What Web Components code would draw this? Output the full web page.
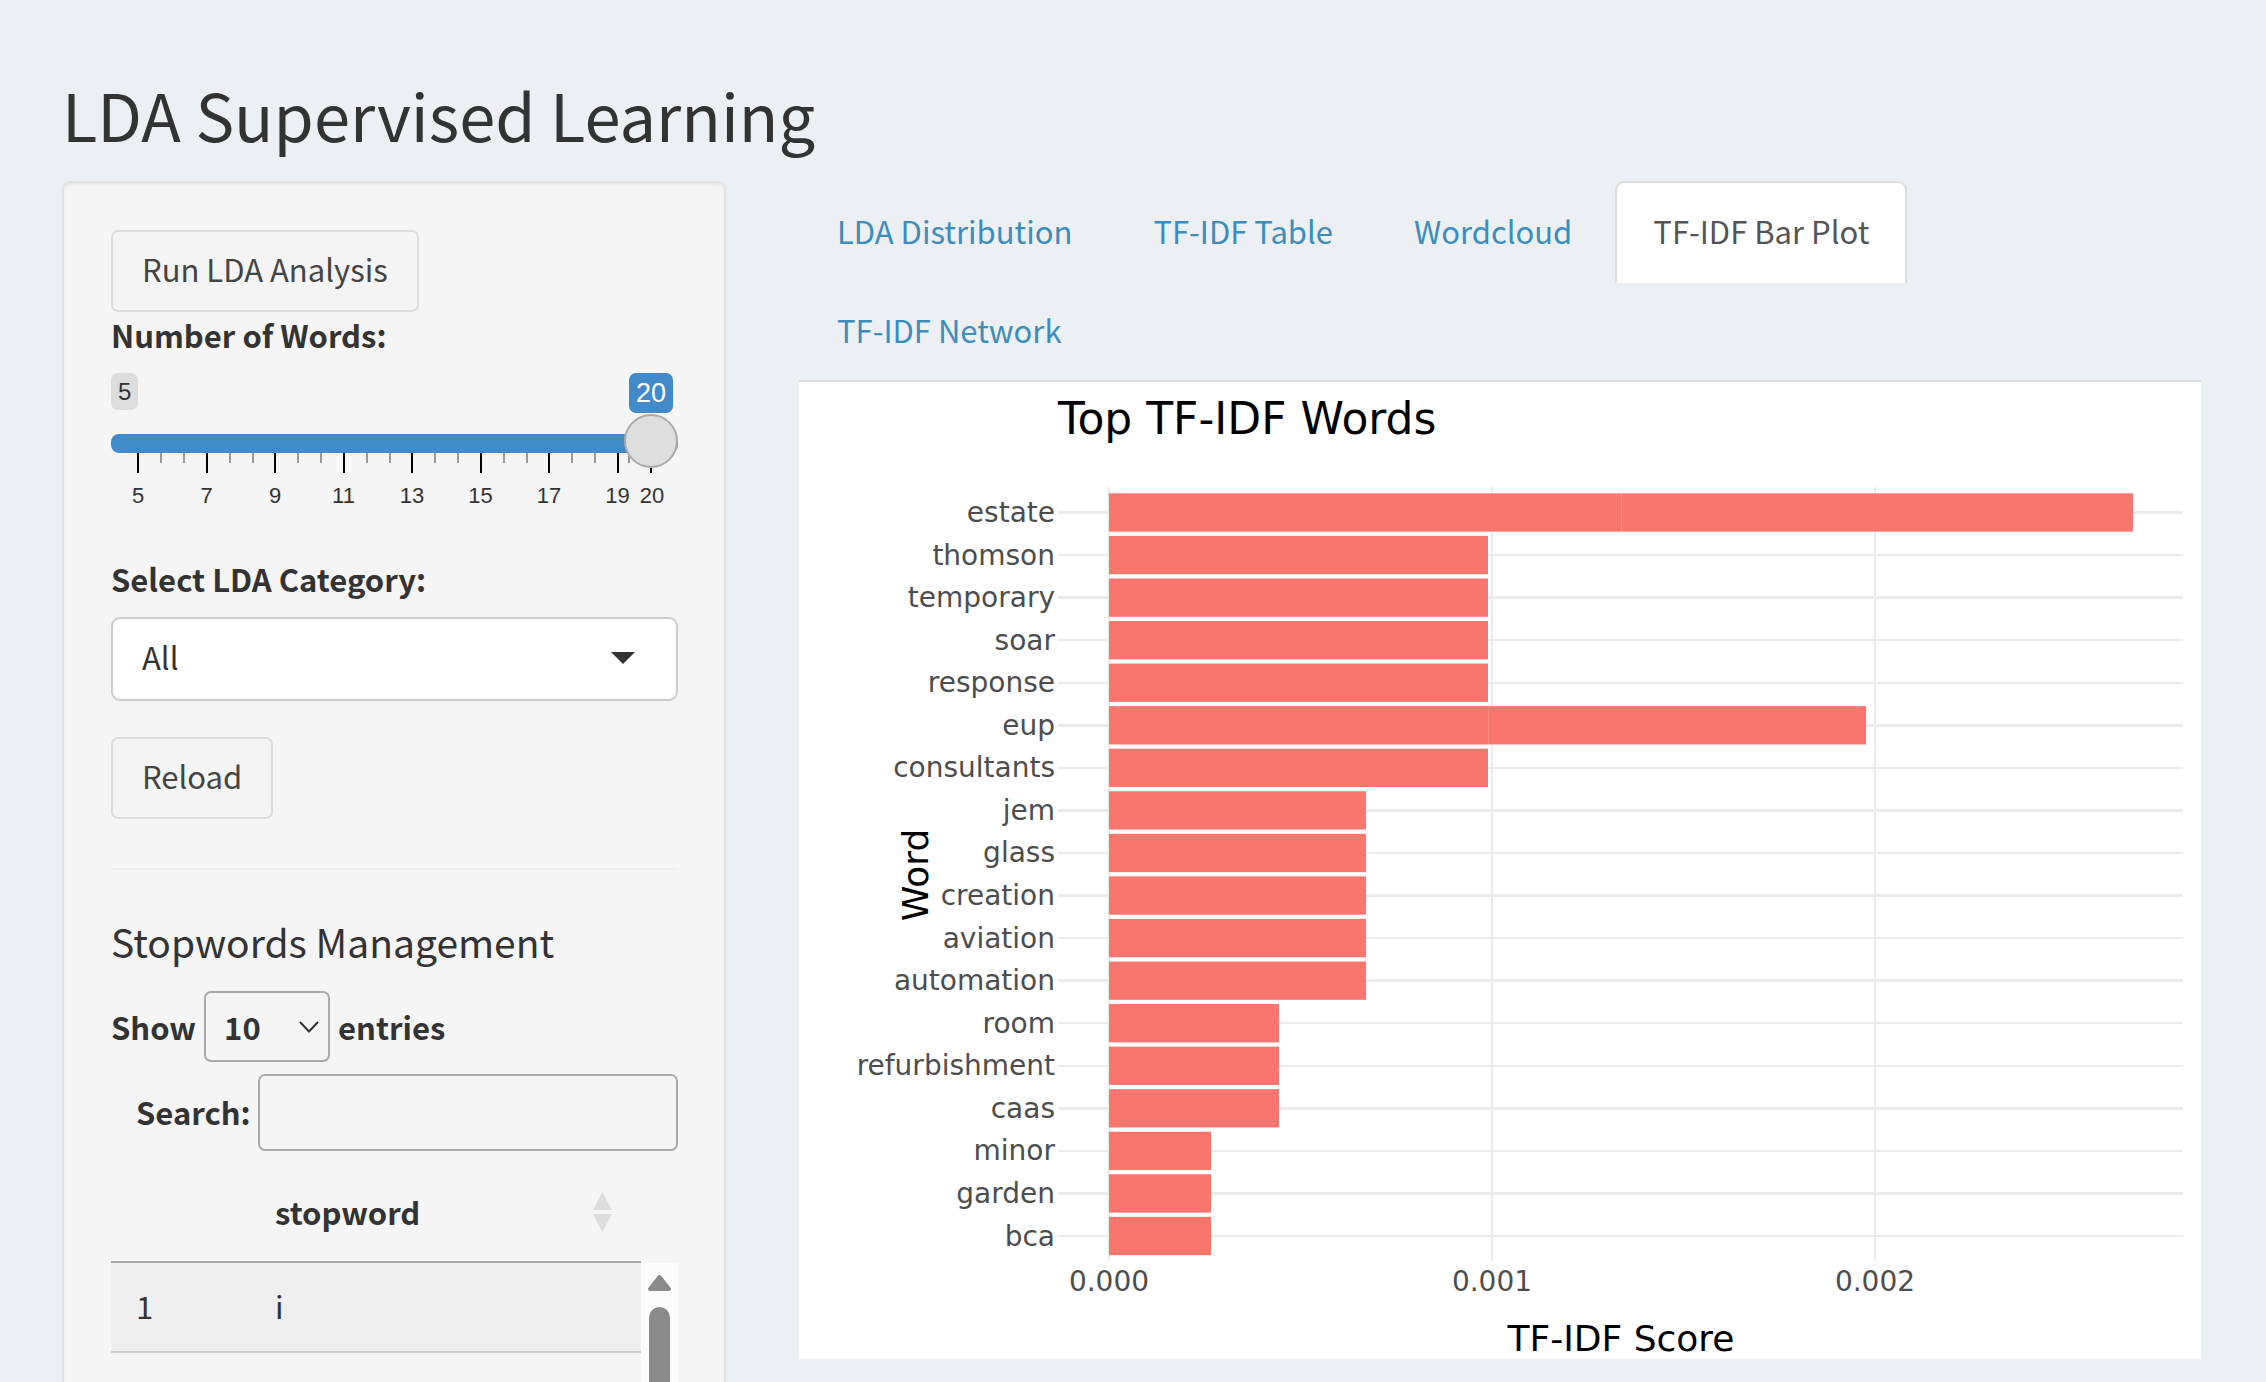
<!DOCTYPE html>
<html lang="en">
<head>
<meta charset="utf-8">
<title>LDA Supervised Learning</title>
<style>
  html { background: #ecf0f5; }
  body { margin: 0; height: 100vh; overflow: hidden; color: #333; font: 31px/46px "Noto Sans CJK JP", "Source Sans Pro", "Open Sans", sans-serif; }
</style>
</head>
<body>
<lda-page>
  <side-panel slot="side">
    <action-button>Run LDA Analysis</action-button>
    <word-slider></word-slider>
    <category-select></category-select>
    <action-button>Reload</action-button>
    <stopword-manager></stopword-manager>
  </side-panel>
  <tab-strip slot="main"></tab-strip>
  <bar-plot slot="main"></bar-plot>
</lda-page>
<script>
const define = (name, html, setup) => customElements.define(name, class extends HTMLElement {
  constructor() {
    super();
    this.attachShadow({ mode: "open" }).innerHTML = "<style>*{box-sizing:border-box}:host{display:block}</style>" + html;
    if (setup) setup(this.shadowRoot);
  }
});

define("lda-page", `
<style>
  :host { padding: 78px 65px 0 62px; }
  h1 { margin: 0 0 31px; font-size: 65px; line-height: 72px; font-weight: 400; }
  .row { display: grid; grid-template-columns: 664px minmax(0, 1fr); column-gap: 73px; align-items: start; }
</style>
<h1>LDA Supervised Learning</h1>
<div class="row"><slot name="side"></slot><main><slot name="main"></slot></main></div>`);

define("side-panel", `
<style>
  :host { padding: 47px 46px 47px 47px; background: #f5f5f5; border: 2px solid #e3e3e3; border-radius: 8px; box-shadow: inset 0 2px 3px rgba(0,0,0,.06); }
</style>
<slot></slot>`);

define("action-button", `
<style>
  button { display: block; height: 82px; padding: 0 29px 4px; background: #f4f4f4; color: #444; border: 2px solid #ddd; border-radius: 7px; font: inherit; }
</style>
<button type="button"><slot></slot></button>`);

define("word-slider", `
<style>
  :host { position: relative; z-index: 0; font-family: "Liberation Sans", Arial, sans-serif; }
  label { display: block; font-family: "Noto Sans CJK JP", sans-serif; font-weight: 700; }
  .tags { display: flex; justify-content: space-between; align-items: flex-start; height: 61px; margin: 15px 5px 0 0; }
  .tags span { padding: 0 7px; border-radius: 7px; }
  .min { background: #ddd; font-size: 24px; line-height: 37px; }
  .now { background: #428bca; color: #fff; font-size: 27px; line-height: 40px; }
  input { display: block; appearance: none; -webkit-appearance: none; width: 100%; height: 19px; margin: 0; background: none; }
  input::-webkit-slider-runnable-track { height: 19px; background: #428bca; border-radius: 8px; }
  input::-webkit-slider-thumb { -webkit-appearance: none; width: 54px; height: 54px; margin-top: -20px; border: 2px solid #ababab; border-radius: 50%; background: #dedede; position: relative; z-index: 1; }
  svg { display: block; width: 100%; height: auto; font-size: 22px; position: relative; z-index: -1; }
</style>
<label for="words">Number of Words:</label>
<div class="tags"><span class="min">5</span><span class="now">20</span></div>
<input id="words" type="range" min="5" max="20" value="20">
<svg viewBox="0 0 567 55" shape-rendering="crispEdges"></svg>`, root => {
  const line = (x, h, c, w) => `<path d="M${x} 0V${h}" stroke="${c}" stroke-width="${w}"/>`;
  let out = "";
  for (let i = 0; i < 8; i++) {
    const x = 27 + i * 68.5;
    out += line(x, 20, "#000", 2) + `<text x="${x}" y="50" text-anchor="middle" fill="#333">${5 + 2 * i}</text>`;
    if (i < 7) out += line(x + 23, 10, "#999", 2) + line(x + 46, 10, "#999", 2);
  }
  out += line(518, 10, "#999", 2) + line(540, 20, "#000", 2) + `<text x="541" y="50" text-anchor="middle" fill="#333">20</text>`;
  root.querySelector("svg").innerHTML = out;
});

define("category-select", `
<style>
  :host { padding: 48px 0 36px; }
  label { display: block; margin-bottom: 15px; font-weight: 700; }
  .box { display: grid; align-items: center; }
  .box > * { grid-area: 1 / 1; }
  select { appearance: none; width: 100%; height: 84px; padding: 0 29px 4px; background: #fff; color: #333; border: 2px solid #ccc; border-radius: 9px; font: inherit; }
  svg { justify-self: end; margin: 0 43px 3px 0; pointer-events: none; }
</style>
<label for="cat">Select LDA Category:</label>
<div class="box">
  <select id="cat"><option>All</option></select>
  <svg width="24" height="12" viewBox="0 0 24 12"><path d="M0 0H24L12 12Z" fill="#333"/></svg>
</div>`);

define("stopword-manager", `
<style>
  hr { margin: 49px 0 45px; border: 0; border-top: 2px solid #eee; }
  h4 { margin: 0 0 24px; font-size: 39px; line-height: 52px; font-weight: 400; }
  .show { display: flex; align-items: center; gap: 8px; font-weight: 700; }
  .box { display: grid; align-items: center; }
  .box > * { grid-area: 1 / 1; }
  select { appearance: none; width: 126px; height: 71px; padding: 0 18px; background: transparent; color: #333; border: 2px solid #aaa; border-radius: 7px; font: inherit; }
  .box svg { justify-self: end; margin-right: 11px; pointer-events: none; }
  .search { display: flex; align-items: center; gap: 7px; margin-top: 12px; padding-left: 25px; font-weight: 700; }
  .search label { padding-bottom: 2px; }
  .search input { flex: 1; min-width: 0; height: 77px; background: transparent; border: 2px solid #aaa; border-radius: 7px; font: inherit; padding: 0 12px; }
  table { width: 100%; border-collapse: collapse; table-layout: fixed; text-align: left; }
  th { height: 111px; padding: 12px 0 0; font-weight: 700; }
  col:first-child { width: 164px; }
  .sort { display: flex; justify-content: space-between; align-items: center; padding-right: 29px; }
  .scroll { display: grid; grid-template-columns: minmax(0, 1fr) 37px; }
  thead tr { border-bottom: 2px solid #aaa; }
  td { height: 90px; padding: 0 0 3px; }
  td:first-child { padding-left: 25px; }
  tbody tr { background: #efefef; border-bottom: 2px solid #ccc; }
  tbody tr + tr { background: none; }
  .bar { margin-top: 112px; background: #fcfcfc; padding-top: 12px; display: flex; flex-direction: column; align-items: center; gap: 16px; }
  .thumb { width: 21px; flex: 1; background: #8b8b8b; border-radius: 11px; }
</style>
<hr>
<h4>Stopwords Management</h4>
<div class="show"><label for="len">Show</label>
  <div class="box"><select id="len"><option>10</option></select>
  <svg width="20" height="12" viewBox="0 0 20 12"><path d="M1 1L10 10.500L19 1" fill="none" stroke="#333" stroke-width="2"/></svg></div>
  <span>entries</span></div>
<div class="search"><label for="find">Search:</label><input id="find" type="search"></div>
<div class="scroll">
  <table><colgroup><col><col></colgroup>
    <thead><tr><th></th><th><div class="sort">stopword
      <svg width="19" height="40" viewBox="0 0 19 40"><path d="M9.500 0L19 18H0ZM9.500 40L19 22H0Z" fill="#ddd"/></svg></div></th></tr></thead>
    <tbody><tr><td>1</td><td>i</td></tr><tr><td></td><td></td></tr></tbody>
  </table>
  <div class="bar"><svg width="23" height="16" viewBox="0 0 23 16"><path d="M11.500 2L21 14H2Z" fill="#8b8b8b" stroke="#8b8b8b" stroke-width="4" stroke-linejoin="round"/></svg><div class="thumb"></div></div>
</div>`);

define("tab-strip", `
<style>
  nav { display: flex; flex-wrap: wrap; column-gap: 5px; padding: 0 240px 1px 0; border-bottom: 2px solid #ddd; }
  a { height: 102px; margin-bottom: -3px; padding: 25px 36px; border: 2px solid transparent; border-bottom: 0; border-radius: 9px 9px 0 0; color: #3c8dbc; text-decoration: none; }
  a[aria-current] { background: #fff; border-color: #ddd; color: #555; }
</style>
<nav><a href="#dist">LDA Distribution</a><a href="#table">TF-IDF Table</a><a href="#cloud">Wordcloud</a><a href="#bar" aria-current="page">TF-IDF Bar Plot</a><a href="#net">TF-IDF Network</a></nav>`);

define("bar-plot", `
<style>
  :host { background: #fff; font-family: "DejaVu Sans", Verdana, sans-serif; }
  svg { display: block; width: 100%; height: auto; }
  .tick { font-size: 28px; fill: #4d4d4d; }
  .axis { font-size: 36px; }
</style>
<svg viewBox="0 0 1402 977" role="img" aria-label="Top TF-IDF Words"></svg>`, root => {
  const zero = 310, unit = 383;
  const rows = [["estate", 1024, 512], ["thomson", 379], ["temporary", 379], ["soar", 379], ["response", 379],
    ["eup", 757, 379], ["consultants", 379], ["jem", 257], ["glass", 257], ["creation", 257], ["aviation", 257],
    ["automation", 257], ["room", 170], ["refurbishment", 170], ["caas", 170], ["minor", 102], ["garden", 102], ["bca", 102]];
  let grid = "", bars = "", text = "";
  rows.forEach(([word, width, seam], i) => {
    const y = 130.500 + i * 42.560;
    grid += `<path d="M259 ${y}H1384"/>`;
    bars += `<rect x="${zero}" y="${y - 19.150}" width="${width}" height="38.300"/>`;
    if (seam) bars += `<path d="M${zero + seam}.5 ${y - 19}v38" stroke="#fff" stroke-opacity=".15"/>`;
    text += `<text class="tick" x="256" y="${y + 9.5}" text-anchor="end">${word}</text>`;
  });
  for (let i = 0; i < 3; i++) {
    const x = zero + i * unit;
    grid += `<path d="M${x} 105V879"/>`;
    text += `<text class="tick" x="${x}" y="909" text-anchor="middle">0.00${i}</text>`;
  }
  root.querySelector("svg").innerHTML = `<g stroke="#ebebeb" stroke-width="2.400" shape-rendering="crispEdges">${grid}</g>
    <g fill="#f8766d">${bars}</g>${text}
    <text x="259" y="52" font-size="44">Top TF-IDF Words</text>
    <text class="axis" x="822" y="969" text-anchor="middle">TF-IDF Score</text>
    <text class="axis" transform="translate(129 493) rotate(-90)" text-anchor="middle">Word</text>`;
});
</script>
</body>
</html>
